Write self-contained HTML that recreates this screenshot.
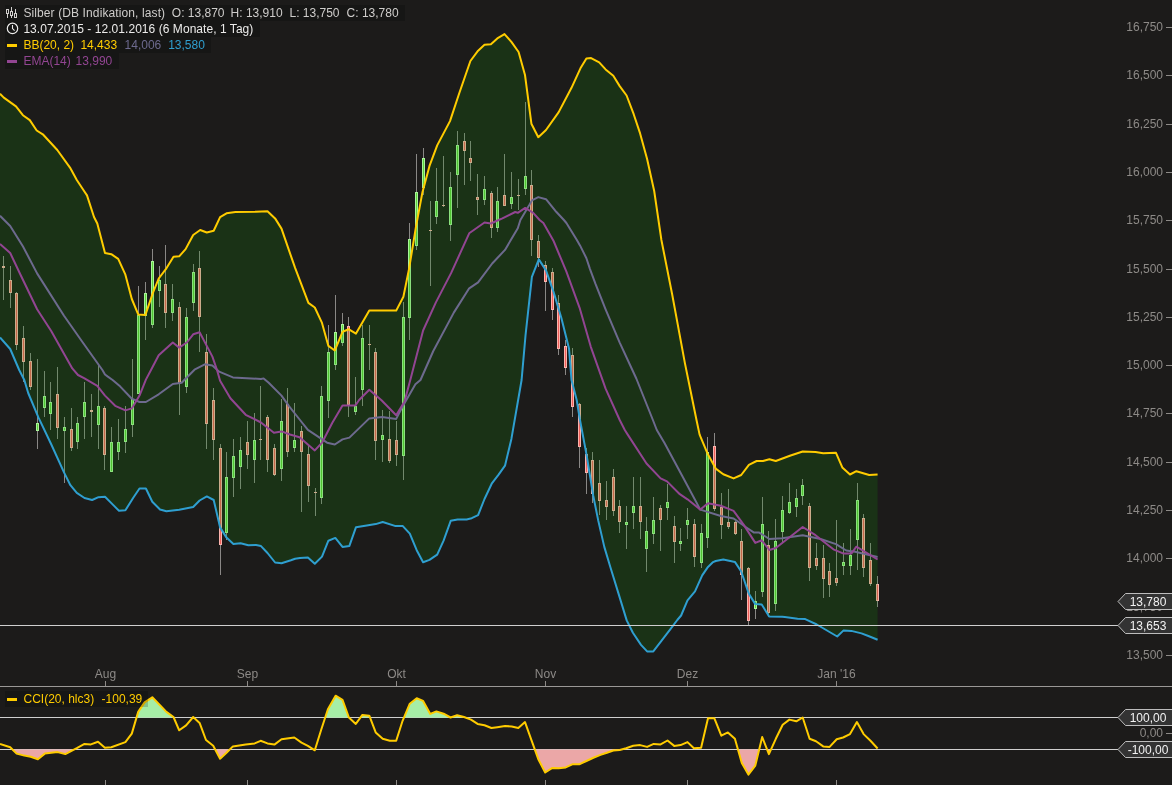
<!DOCTYPE html>
<html><head><meta charset="utf-8"><style>
html,body{margin:0;padding:0;background:#1c1b1a;}
body{width:1172px;height:785px;overflow:hidden;position:relative;font-family:"Liberation Sans",sans-serif;}
svg{position:absolute;left:0;top:0;will-change:transform;}
text{font-family:"Liberation Sans",sans-serif;font-size:12px;}
</style></head><body>
<svg width="1172" height="785" viewBox="0 0 1172 785">
<rect x="0" y="0" width="1172" height="785" fill="#1c1b1a"/>

<g shape-rendering="crispEdges">
<rect x="3" y="255.5" width="1" height="44.5" fill="#8a8886"/>
<rect x="2" y="266.0" width="3" height="1.5" fill="#fbb3ad"/>
<rect x="10" y="265.7" width="1" height="42.3" fill="#8a8886"/>
<rect x="9" y="280.3" width="3" height="12.3" fill="#fbb3ad"/>
<rect x="10" y="281.3" width="1" height="10.3" fill="#f0605a"/>
<rect x="16" y="292.0" width="1" height="58.0" fill="#8a8886"/>
<rect x="15" y="293.3" width="3" height="51.7" fill="#fbb3ad"/>
<rect x="16" y="294.3" width="1" height="49.7" fill="#f0605a"/>
<rect x="23" y="326.0" width="1" height="55.5" fill="#8a8886"/>
<rect x="22" y="338.0" width="3" height="23.5" fill="#fbb3ad"/>
<rect x="23" y="339.0" width="1" height="21.5" fill="#f0605a"/>
<rect x="30" y="352.8" width="1" height="37.2" fill="#8a8886"/>
<rect x="29" y="361.0" width="3" height="25.6" fill="#fbb3ad"/>
<rect x="30" y="362.0" width="1" height="23.6" fill="#f0605a"/>
<rect x="37" y="359.0" width="1" height="90.0" fill="#8a8886"/>
<rect x="36" y="423.0" width="3" height="8.4" fill="#a9f59a"/>
<rect x="37" y="424.0" width="1" height="6.4" fill="#5fd23c"/>
<rect x="44" y="370.7" width="1" height="46.3" fill="#8a8886"/>
<rect x="43" y="395.6" width="3" height="12.8" fill="#a9f59a"/>
<rect x="44" y="396.6" width="1" height="10.8" fill="#5fd23c"/>
<rect x="50" y="381.5" width="1" height="48.5" fill="#8a8886"/>
<rect x="49" y="402.0" width="3" height="11.5" fill="#a9f59a"/>
<rect x="50" y="403.0" width="1" height="9.5" fill="#5fd23c"/>
<rect x="57" y="366.8" width="1" height="72.2" fill="#8a8886"/>
<rect x="56" y="394.3" width="3" height="33.3" fill="#fbb3ad"/>
<rect x="57" y="395.3" width="1" height="31.3" fill="#f0605a"/>
<rect x="64" y="417.4" width="1" height="65.2" fill="#8a8886"/>
<rect x="63" y="426.8" width="3" height="4.6" fill="#a9f59a"/>
<rect x="64" y="427.8" width="1" height="2.6" fill="#5fd23c"/>
<rect x="71" y="408.4" width="1" height="43.0" fill="#8a8886"/>
<rect x="70" y="429.4" width="3" height="18.6" fill="#fbb3ad"/>
<rect x="71" y="430.4" width="1" height="16.6" fill="#f0605a"/>
<rect x="77" y="417.4" width="1" height="31.9" fill="#8a8886"/>
<rect x="76" y="423.2" width="3" height="19.2" fill="#a9f59a"/>
<rect x="77" y="424.2" width="1" height="17.2" fill="#5fd23c"/>
<rect x="84" y="381.5" width="1" height="57.1" fill="#8a8886"/>
<rect x="83" y="402.0" width="3" height="15.4" fill="#a9f59a"/>
<rect x="84" y="403.0" width="1" height="13.4" fill="#5fd23c"/>
<rect x="91" y="394.3" width="1" height="42.2" fill="#8a8886"/>
<rect x="90" y="410.0" width="3" height="1.5" fill="#fbb3ad"/>
<rect x="98" y="364.0" width="1" height="85.3" fill="#8a8886"/>
<rect x="97" y="405.8" width="3" height="19.2" fill="#a9f59a"/>
<rect x="98" y="406.8" width="1" height="17.2" fill="#5fd23c"/>
<rect x="104" y="405.8" width="1" height="64.0" fill="#8a8886"/>
<rect x="103" y="407.9" width="3" height="46.6" fill="#fbb3ad"/>
<rect x="104" y="408.9" width="1" height="44.6" fill="#f0605a"/>
<rect x="111" y="426.8" width="1" height="45.6" fill="#8a8886"/>
<rect x="110" y="442.2" width="3" height="29.4" fill="#a9f59a"/>
<rect x="111" y="443.2" width="1" height="27.4" fill="#5fd23c"/>
<rect x="118" y="418.6" width="1" height="41.0" fill="#8a8886"/>
<rect x="117" y="442.2" width="3" height="10.2" fill="#a9f59a"/>
<rect x="118" y="443.2" width="1" height="8.2" fill="#5fd23c"/>
<rect x="125" y="405.8" width="1" height="47.4" fill="#8a8886"/>
<rect x="124" y="428.9" width="3" height="13.3" fill="#a9f59a"/>
<rect x="125" y="429.9" width="1" height="11.3" fill="#5fd23c"/>
<rect x="132" y="359.0" width="1" height="77.5" fill="#8a8886"/>
<rect x="131" y="399.4" width="3" height="25.6" fill="#a9f59a"/>
<rect x="132" y="400.4" width="1" height="23.6" fill="#5fd23c"/>
<rect x="138" y="286.0" width="1" height="108.3" fill="#8a8886"/>
<rect x="137" y="315.0" width="3" height="79.3" fill="#a9f59a"/>
<rect x="138" y="316.0" width="1" height="77.3" fill="#5fd23c"/>
<rect x="145" y="282.4" width="1" height="57.6" fill="#8a8886"/>
<rect x="144" y="292.6" width="3" height="23.0" fill="#a9f59a"/>
<rect x="145" y="293.6" width="1" height="21.0" fill="#5fd23c"/>
<rect x="152" y="249.0" width="1" height="79.0" fill="#8a8886"/>
<rect x="151" y="261.4" width="3" height="63.2" fill="#a9f59a"/>
<rect x="152" y="262.4" width="1" height="61.2" fill="#5fd23c"/>
<rect x="159" y="265.7" width="1" height="41.0" fill="#8a8886"/>
<rect x="158" y="280.3" width="3" height="10.3" fill="#a9f59a"/>
<rect x="159" y="281.3" width="1" height="8.3" fill="#5fd23c"/>
<rect x="165" y="245.3" width="1" height="82.7" fill="#8a8886"/>
<rect x="164" y="284.2" width="3" height="28.8" fill="#fbb3ad"/>
<rect x="165" y="285.2" width="1" height="26.8" fill="#f0605a"/>
<rect x="172" y="284.4" width="1" height="36.4" fill="#8a8886"/>
<rect x="171" y="299.0" width="3" height="14.0" fill="#a9f59a"/>
<rect x="172" y="300.0" width="1" height="12.0" fill="#5fd23c"/>
<rect x="179" y="301.6" width="1" height="113.2" fill="#8a8886"/>
<rect x="178" y="307.2" width="3" height="76.8" fill="#fbb3ad"/>
<rect x="179" y="308.2" width="1" height="74.8" fill="#f0605a"/>
<rect x="186" y="307.5" width="1" height="85.5" fill="#8a8886"/>
<rect x="185" y="317.4" width="3" height="69.2" fill="#a9f59a"/>
<rect x="186" y="318.4" width="1" height="67.2" fill="#5fd23c"/>
<rect x="193" y="264.0" width="1" height="46.5" fill="#8a8886"/>
<rect x="192" y="272.0" width="3" height="31.4" fill="#a9f59a"/>
<rect x="193" y="273.0" width="1" height="29.4" fill="#5fd23c"/>
<rect x="199" y="251.0" width="1" height="100.5" fill="#8a8886"/>
<rect x="198" y="268.3" width="3" height="49.1" fill="#fbb3ad"/>
<rect x="199" y="269.3" width="1" height="47.1" fill="#f0605a"/>
<rect x="206" y="333.6" width="1" height="115.7" fill="#8a8886"/>
<rect x="205" y="352.0" width="3" height="71.8" fill="#fbb3ad"/>
<rect x="206" y="353.0" width="1" height="69.8" fill="#f0605a"/>
<rect x="213" y="388.0" width="1" height="71.6" fill="#8a8886"/>
<rect x="212" y="400.2" width="3" height="40.2" fill="#fbb3ad"/>
<rect x="213" y="401.2" width="1" height="38.2" fill="#f0605a"/>
<rect x="220" y="444.2" width="1" height="130.8" fill="#8a8886"/>
<rect x="219" y="448.0" width="3" height="97.3" fill="#fbb3ad"/>
<rect x="220" y="449.0" width="1" height="95.3" fill="#f0605a"/>
<rect x="226" y="451.9" width="1" height="88.3" fill="#8a8886"/>
<rect x="225" y="477.0" width="3" height="56.3" fill="#a9f59a"/>
<rect x="226" y="478.0" width="1" height="54.3" fill="#5fd23c"/>
<rect x="233" y="439.0" width="1" height="57.7" fill="#8a8886"/>
<rect x="232" y="456.3" width="3" height="21.2" fill="#a9f59a"/>
<rect x="233" y="457.3" width="1" height="19.2" fill="#5fd23c"/>
<rect x="240" y="437.0" width="1" height="52.0" fill="#8a8886"/>
<rect x="239" y="450.0" width="3" height="16.5" fill="#a9f59a"/>
<rect x="240" y="451.0" width="1" height="14.5" fill="#5fd23c"/>
<rect x="247" y="421.2" width="1" height="47.3" fill="#8a8886"/>
<rect x="246" y="442.2" width="3" height="12.3" fill="#fbb3ad"/>
<rect x="247" y="443.2" width="1" height="10.3" fill="#f0605a"/>
<rect x="254" y="413.0" width="1" height="69.6" fill="#8a8886"/>
<rect x="253" y="439.9" width="3" height="20.5" fill="#a9f59a"/>
<rect x="254" y="440.9" width="1" height="18.5" fill="#5fd23c"/>
<rect x="260" y="385.9" width="1" height="73.7" fill="#8a8886"/>
<rect x="259" y="438.5" width="3" height="1.5" fill="#fbb3ad"/>
<rect x="267" y="414.8" width="1" height="57.6" fill="#8a8886"/>
<rect x="266" y="417.4" width="3" height="43.0" fill="#fbb3ad"/>
<rect x="267" y="418.4" width="1" height="41.0" fill="#f0605a"/>
<rect x="274" y="444.2" width="1" height="32.0" fill="#8a8886"/>
<rect x="273" y="448.0" width="3" height="27.4" fill="#fbb3ad"/>
<rect x="274" y="449.0" width="1" height="25.4" fill="#f0605a"/>
<rect x="281" y="399.4" width="1" height="81.2" fill="#8a8886"/>
<rect x="280" y="421.2" width="3" height="48.1" fill="#a9f59a"/>
<rect x="281" y="422.2" width="1" height="46.1" fill="#5fd23c"/>
<rect x="287" y="388.0" width="1" height="69.0" fill="#8a8886"/>
<rect x="286" y="404.0" width="3" height="48.4" fill="#fbb3ad"/>
<rect x="287" y="405.0" width="1" height="46.4" fill="#f0605a"/>
<rect x="294" y="403.3" width="1" height="48.6" fill="#8a8886"/>
<rect x="293" y="439.9" width="3" height="8.1" fill="#a9f59a"/>
<rect x="294" y="440.9" width="1" height="6.1" fill="#5fd23c"/>
<rect x="301" y="425.6" width="1" height="86.2" fill="#8a8886"/>
<rect x="300" y="431.2" width="3" height="21.2" fill="#fbb3ad"/>
<rect x="301" y="432.2" width="1" height="19.2" fill="#f0605a"/>
<rect x="308" y="445.0" width="1" height="56.6" fill="#8a8886"/>
<rect x="307" y="454.2" width="3" height="31.3" fill="#fbb3ad"/>
<rect x="308" y="455.2" width="1" height="29.3" fill="#f0605a"/>
<rect x="315" y="487.5" width="1" height="28.2" fill="#8a8886"/>
<rect x="314" y="491.6" width="3" height="1.5" fill="#fbb3ad"/>
<rect x="321" y="386.4" width="1" height="117.2" fill="#8a8886"/>
<rect x="320" y="396.1" width="3" height="101.6" fill="#a9f59a"/>
<rect x="321" y="397.1" width="1" height="99.6" fill="#5fd23c"/>
<rect x="328" y="325.4" width="1" height="93.0" fill="#8a8886"/>
<rect x="327" y="351.8" width="3" height="48.7" fill="#a9f59a"/>
<rect x="328" y="352.8" width="1" height="46.7" fill="#5fd23c"/>
<rect x="335" y="295.2" width="1" height="75.0" fill="#8a8886"/>
<rect x="334" y="332.3" width="3" height="32.7" fill="#a9f59a"/>
<rect x="335" y="333.3" width="1" height="30.7" fill="#5fd23c"/>
<rect x="342" y="312.6" width="1" height="33.3" fill="#8a8886"/>
<rect x="341" y="324.1" width="3" height="18.5" fill="#a9f59a"/>
<rect x="342" y="325.1" width="1" height="16.5" fill="#5fd23c"/>
<rect x="348" y="317.2" width="1" height="99.9" fill="#8a8886"/>
<rect x="347" y="325.9" width="3" height="79.2" fill="#fbb3ad"/>
<rect x="348" y="326.9" width="1" height="77.2" fill="#f0605a"/>
<rect x="355" y="376.6" width="1" height="37.9" fill="#8a8886"/>
<rect x="354" y="405.6" width="3" height="6.4" fill="#a9f59a"/>
<rect x="355" y="406.6" width="1" height="4.4" fill="#5fd23c"/>
<rect x="362" y="325.4" width="1" height="80.2" fill="#8a8886"/>
<rect x="361" y="338.2" width="3" height="52.0" fill="#a9f59a"/>
<rect x="362" y="339.2" width="1" height="50.0" fill="#5fd23c"/>
<rect x="369" y="325.4" width="1" height="44.8" fill="#8a8886"/>
<rect x="368" y="343.6" width="3" height="1.5" fill="#fbb3ad"/>
<rect x="375" y="348.0" width="1" height="111.9" fill="#8a8886"/>
<rect x="374" y="352.3" width="3" height="88.4" fill="#fbb3ad"/>
<rect x="375" y="353.3" width="1" height="86.4" fill="#f0605a"/>
<rect x="382" y="410.0" width="1" height="51.9" fill="#8a8886"/>
<rect x="381" y="435.0" width="3" height="4.6" fill="#a9f59a"/>
<rect x="382" y="436.0" width="1" height="2.6" fill="#5fd23c"/>
<rect x="389" y="410.7" width="1" height="52.5" fill="#8a8886"/>
<rect x="388" y="438.9" width="3" height="21.7" fill="#fbb3ad"/>
<rect x="389" y="439.9" width="1" height="19.7" fill="#f0605a"/>
<rect x="396" y="421.0" width="1" height="44.7" fill="#8a8886"/>
<rect x="395" y="440.1" width="3" height="14.6" fill="#fbb3ad"/>
<rect x="396" y="441.1" width="1" height="12.6" fill="#f0605a"/>
<rect x="403" y="302.4" width="1" height="177.9" fill="#8a8886"/>
<rect x="402" y="317.0" width="3" height="139.3" fill="#a9f59a"/>
<rect x="403" y="318.0" width="1" height="137.3" fill="#5fd23c"/>
<rect x="409" y="222.5" width="1" height="117.0" fill="#8a8886"/>
<rect x="408" y="239.2" width="3" height="78.5" fill="#a9f59a"/>
<rect x="409" y="240.2" width="1" height="76.5" fill="#5fd23c"/>
<rect x="416" y="154.4" width="1" height="95.6" fill="#8a8886"/>
<rect x="415" y="191.5" width="3" height="54.1" fill="#a9f59a"/>
<rect x="416" y="192.5" width="1" height="52.1" fill="#5fd23c"/>
<rect x="423" y="148.0" width="1" height="47.3" fill="#8a8886"/>
<rect x="422" y="158.2" width="3" height="29.4" fill="#a9f59a"/>
<rect x="423" y="159.2" width="1" height="27.4" fill="#5fd23c"/>
<rect x="430" y="201.0" width="1" height="84.7" fill="#8a8886"/>
<rect x="429" y="229.7" width="3" height="1.5" fill="#fbb3ad"/>
<rect x="436" y="168.0" width="1" height="55.5" fill="#8a8886"/>
<rect x="435" y="201.0" width="3" height="15.6" fill="#a9f59a"/>
<rect x="436" y="202.0" width="1" height="13.6" fill="#5fd23c"/>
<rect x="443" y="155.7" width="1" height="51.3" fill="#8a8886"/>
<rect x="442" y="204.5" width="3" height="1.5" fill="#fbb3ad"/>
<rect x="450" y="172.3" width="1" height="68.7" fill="#8a8886"/>
<rect x="449" y="187.0" width="3" height="37.8" fill="#a9f59a"/>
<rect x="450" y="188.0" width="1" height="35.8" fill="#5fd23c"/>
<rect x="457" y="131.3" width="1" height="76.7" fill="#8a8886"/>
<rect x="456" y="145.4" width="3" height="29.4" fill="#a9f59a"/>
<rect x="457" y="146.4" width="1" height="27.4" fill="#5fd23c"/>
<rect x="464" y="132.6" width="1" height="52.4" fill="#8a8886"/>
<rect x="463" y="141.0" width="3" height="9.5" fill="#fbb3ad"/>
<rect x="464" y="142.0" width="1" height="7.5" fill="#f0605a"/>
<rect x="470" y="141.0" width="1" height="39.7" fill="#8a8886"/>
<rect x="469" y="158.2" width="3" height="4.6" fill="#fbb3ad"/>
<rect x="470" y="159.2" width="1" height="2.6" fill="#f0605a"/>
<rect x="477" y="174.3" width="1" height="41.1" fill="#8a8886"/>
<rect x="476" y="196.6" width="3" height="3.1" fill="#fbb3ad"/>
<rect x="477" y="197.6" width="1" height="1.1" fill="#f0605a"/>
<rect x="484" y="176.0" width="1" height="29.0" fill="#8a8886"/>
<rect x="483" y="189.0" width="3" height="10.7" fill="#a9f59a"/>
<rect x="484" y="190.0" width="1" height="8.7" fill="#5fd23c"/>
<rect x="491" y="191.0" width="1" height="47.4" fill="#8a8886"/>
<rect x="490" y="192.8" width="3" height="35.4" fill="#fbb3ad"/>
<rect x="491" y="193.8" width="1" height="33.4" fill="#f0605a"/>
<rect x="497" y="186.9" width="1" height="45.1" fill="#8a8886"/>
<rect x="496" y="201.0" width="3" height="27.2" fill="#a9f59a"/>
<rect x="497" y="202.0" width="1" height="25.2" fill="#5fd23c"/>
<rect x="504" y="154.4" width="1" height="50.6" fill="#8a8886"/>
<rect x="503" y="195.3" width="3" height="10.3" fill="#fbb3ad"/>
<rect x="504" y="196.3" width="1" height="8.3" fill="#f0605a"/>
<rect x="511" y="172.3" width="1" height="37.1" fill="#8a8886"/>
<rect x="510" y="196.6" width="3" height="7.2" fill="#a9f59a"/>
<rect x="511" y="197.6" width="1" height="5.2" fill="#5fd23c"/>
<rect x="518" y="179.2" width="1" height="30.8" fill="#8a8886"/>
<rect x="517" y="194.8" width="3" height="1.5" fill="#fbb3ad"/>
<rect x="525" y="101.9" width="1" height="93.1" fill="#8a8886"/>
<rect x="524" y="175.6" width="3" height="13.8" fill="#a9f59a"/>
<rect x="525" y="176.6" width="1" height="11.8" fill="#5fd23c"/>
<rect x="531" y="170.2" width="1" height="86.1" fill="#8a8886"/>
<rect x="530" y="185.0" width="3" height="54.7" fill="#fbb3ad"/>
<rect x="531" y="186.0" width="1" height="52.7" fill="#f0605a"/>
<rect x="538" y="234.6" width="1" height="32.4" fill="#8a8886"/>
<rect x="537" y="241.0" width="3" height="17.4" fill="#fbb3ad"/>
<rect x="538" y="242.0" width="1" height="15.4" fill="#f0605a"/>
<rect x="545" y="261.4" width="1" height="49.2" fill="#8a8886"/>
<rect x="544" y="264.5" width="3" height="17.9" fill="#fbb3ad"/>
<rect x="545" y="265.5" width="1" height="15.9" fill="#f0605a"/>
<rect x="552" y="268.0" width="1" height="52.3" fill="#8a8886"/>
<rect x="551" y="272.2" width="3" height="37.3" fill="#fbb3ad"/>
<rect x="552" y="273.2" width="1" height="35.3" fill="#f0605a"/>
<rect x="558" y="294.7" width="1" height="60.3" fill="#8a8886"/>
<rect x="557" y="303.1" width="3" height="45.4" fill="#fbb3ad"/>
<rect x="558" y="304.1" width="1" height="43.4" fill="#f0605a"/>
<rect x="565" y="340.0" width="1" height="35.3" fill="#8a8886"/>
<rect x="564" y="346.4" width="3" height="21.2" fill="#fbb3ad"/>
<rect x="565" y="347.4" width="1" height="19.2" fill="#f0605a"/>
<rect x="572" y="348.0" width="1" height="69.1" fill="#8a8886"/>
<rect x="571" y="354.8" width="3" height="52.1" fill="#fbb3ad"/>
<rect x="572" y="355.8" width="1" height="50.1" fill="#f0605a"/>
<rect x="579" y="402.5" width="1" height="65.8" fill="#8a8886"/>
<rect x="578" y="404.3" width="3" height="42.2" fill="#fbb3ad"/>
<rect x="579" y="405.3" width="1" height="40.2" fill="#f0605a"/>
<rect x="586" y="447.8" width="1" height="46.1" fill="#8a8886"/>
<rect x="585" y="454.2" width="3" height="19.2" fill="#fbb3ad"/>
<rect x="586" y="455.2" width="1" height="17.2" fill="#f0605a"/>
<rect x="592" y="452.0" width="1" height="51.2" fill="#8a8886"/>
<rect x="591" y="459.7" width="3" height="34.5" fill="#fbb3ad"/>
<rect x="592" y="460.7" width="1" height="32.5" fill="#f0605a"/>
<rect x="599" y="459.7" width="1" height="55.5" fill="#8a8886"/>
<rect x="598" y="482.7" width="3" height="17.9" fill="#fbb3ad"/>
<rect x="599" y="483.7" width="1" height="15.9" fill="#f0605a"/>
<rect x="606" y="481.0" width="1" height="38.8" fill="#8a8886"/>
<rect x="605" y="499.9" width="3" height="6.6" fill="#fbb3ad"/>
<rect x="606" y="500.9" width="1" height="4.6" fill="#f0605a"/>
<rect x="613" y="468.6" width="1" height="47.4" fill="#8a8886"/>
<rect x="612" y="476.8" width="3" height="34.1" fill="#fbb3ad"/>
<rect x="613" y="477.8" width="1" height="32.1" fill="#f0605a"/>
<rect x="619" y="499.9" width="1" height="32.7" fill="#8a8886"/>
<rect x="618" y="506.3" width="3" height="16.1" fill="#fbb3ad"/>
<rect x="619" y="507.3" width="1" height="14.1" fill="#f0605a"/>
<rect x="626" y="505.7" width="1" height="43.6" fill="#8a8886"/>
<rect x="625" y="521.6" width="3" height="3.4" fill="#a9f59a"/>
<rect x="626" y="522.6" width="1" height="1.4" fill="#5fd23c"/>
<rect x="633" y="476.8" width="1" height="52.0" fill="#8a8886"/>
<rect x="632" y="505.7" width="3" height="7.0" fill="#a9f59a"/>
<rect x="633" y="506.7" width="1" height="5.0" fill="#5fd23c"/>
<rect x="640" y="476.8" width="1" height="62.2" fill="#8a8886"/>
<rect x="639" y="505.7" width="3" height="16.7" fill="#fbb3ad"/>
<rect x="640" y="506.7" width="1" height="14.7" fill="#f0605a"/>
<rect x="646" y="517.3" width="1" height="55.0" fill="#8a8886"/>
<rect x="645" y="530.6" width="3" height="18.7" fill="#a9f59a"/>
<rect x="646" y="531.6" width="1" height="16.7" fill="#5fd23c"/>
<rect x="653" y="496.8" width="1" height="47.3" fill="#8a8886"/>
<rect x="652" y="519.8" width="3" height="14.1" fill="#a9f59a"/>
<rect x="653" y="520.8" width="1" height="12.1" fill="#5fd23c"/>
<rect x="660" y="504.5" width="1" height="46.0" fill="#8a8886"/>
<rect x="659" y="507.8" width="3" height="12.5" fill="#fbb3ad"/>
<rect x="660" y="508.8" width="1" height="10.5" fill="#f0605a"/>
<rect x="667" y="483.5" width="1" height="36.3" fill="#8a8886"/>
<rect x="666" y="501.9" width="3" height="6.4" fill="#a9f59a"/>
<rect x="667" y="502.9" width="1" height="4.4" fill="#5fd23c"/>
<rect x="674" y="516.0" width="1" height="47.3" fill="#8a8886"/>
<rect x="673" y="525.7" width="3" height="15.9" fill="#fbb3ad"/>
<rect x="674" y="526.7" width="1" height="13.9" fill="#f0605a"/>
<rect x="680" y="527.5" width="1" height="23.0" fill="#8a8886"/>
<rect x="679" y="541.1" width="3" height="2.5" fill="#a9f59a"/>
<rect x="680" y="542.1" width="1" height="0.5" fill="#5fd23c"/>
<rect x="687" y="508.3" width="1" height="30.7" fill="#8a8886"/>
<rect x="686" y="519.8" width="3" height="5.2" fill="#a9f59a"/>
<rect x="687" y="520.8" width="1" height="3.2" fill="#5fd23c"/>
<rect x="694" y="518.5" width="1" height="48.7" fill="#8a8886"/>
<rect x="693" y="523.7" width="3" height="33.2" fill="#fbb3ad"/>
<rect x="694" y="524.7" width="1" height="31.2" fill="#f0605a"/>
<rect x="701" y="523.7" width="1" height="44.7" fill="#8a8886"/>
<rect x="700" y="532.6" width="3" height="30.0" fill="#a9f59a"/>
<rect x="701" y="533.6" width="1" height="28.0" fill="#5fd23c"/>
<rect x="707" y="437.0" width="1" height="111.0" fill="#8a8886"/>
<rect x="706" y="452.0" width="3" height="85.7" fill="#a9f59a"/>
<rect x="707" y="453.0" width="1" height="83.7" fill="#5fd23c"/>
<rect x="714" y="432.8" width="1" height="78.1" fill="#8a8886"/>
<rect x="713" y="445.6" width="3" height="63.4" fill="#fbb3ad"/>
<rect x="714" y="446.6" width="1" height="61.4" fill="#f0605a"/>
<rect x="721" y="493.0" width="1" height="46.0" fill="#8a8886"/>
<rect x="720" y="507.0" width="3" height="18.0" fill="#fbb3ad"/>
<rect x="721" y="508.0" width="1" height="16.0" fill="#f0605a"/>
<rect x="728" y="488.6" width="1" height="40.2" fill="#8a8886"/>
<rect x="727" y="521.9" width="3" height="5.1" fill="#fbb3ad"/>
<rect x="728" y="522.9" width="1" height="3.1" fill="#f0605a"/>
<rect x="735" y="521.1" width="1" height="13.6" fill="#8a8886"/>
<rect x="734" y="521.9" width="3" height="12.0" fill="#fbb3ad"/>
<rect x="735" y="522.9" width="1" height="10.0" fill="#f0605a"/>
<rect x="741" y="528.8" width="1" height="71.6" fill="#8a8886"/>
<rect x="740" y="541.1" width="3" height="33.8" fill="#fbb3ad"/>
<rect x="741" y="542.1" width="1" height="31.8" fill="#f0605a"/>
<rect x="748" y="567.2" width="1" height="57.3" fill="#8a8886"/>
<rect x="747" y="567.9" width="3" height="52.7" fill="#fbb3ad"/>
<rect x="748" y="568.9" width="1" height="50.7" fill="#f0605a"/>
<rect x="755" y="591.0" width="1" height="28.3" fill="#8a8886"/>
<rect x="754" y="601.2" width="3" height="7.9" fill="#a9f59a"/>
<rect x="755" y="602.2" width="1" height="5.9" fill="#5fd23c"/>
<rect x="762" y="496.8" width="1" height="99.8" fill="#8a8886"/>
<rect x="761" y="524.4" width="3" height="67.1" fill="#a9f59a"/>
<rect x="762" y="525.4" width="1" height="65.1" fill="#5fd23c"/>
<rect x="768" y="531.3" width="1" height="82.7" fill="#8a8886"/>
<rect x="767" y="545.4" width="3" height="67.6" fill="#fbb3ad"/>
<rect x="768" y="546.4" width="1" height="65.6" fill="#f0605a"/>
<rect x="775" y="518.5" width="1" height="92.2" fill="#8a8886"/>
<rect x="774" y="540.8" width="3" height="63.0" fill="#a9f59a"/>
<rect x="775" y="541.8" width="1" height="61.0" fill="#5fd23c"/>
<rect x="782" y="495.5" width="1" height="46.1" fill="#8a8886"/>
<rect x="781" y="510.1" width="3" height="21.7" fill="#a9f59a"/>
<rect x="782" y="511.1" width="1" height="19.7" fill="#5fd23c"/>
<rect x="789" y="482.7" width="1" height="31.5" fill="#8a8886"/>
<rect x="788" y="502.4" width="3" height="10.3" fill="#a9f59a"/>
<rect x="789" y="503.4" width="1" height="8.3" fill="#5fd23c"/>
<rect x="796" y="489.1" width="1" height="28.2" fill="#8a8886"/>
<rect x="795" y="498.0" width="3" height="9.0" fill="#a9f59a"/>
<rect x="796" y="499.0" width="1" height="7.0" fill="#5fd23c"/>
<rect x="802" y="478.9" width="1" height="25.6" fill="#8a8886"/>
<rect x="801" y="485.3" width="3" height="10.2" fill="#a9f59a"/>
<rect x="802" y="486.3" width="1" height="8.2" fill="#5fd23c"/>
<rect x="809" y="503.2" width="1" height="78.0" fill="#8a8886"/>
<rect x="808" y="506.3" width="3" height="61.6" fill="#fbb3ad"/>
<rect x="809" y="507.3" width="1" height="59.6" fill="#f0605a"/>
<rect x="816" y="542.9" width="1" height="26.8" fill="#8a8886"/>
<rect x="815" y="558.2" width="3" height="8.2" fill="#fbb3ad"/>
<rect x="816" y="559.2" width="1" height="6.2" fill="#f0605a"/>
<rect x="823" y="545.4" width="1" height="52.5" fill="#8a8886"/>
<rect x="822" y="558.2" width="3" height="20.5" fill="#fbb3ad"/>
<rect x="823" y="559.2" width="1" height="18.5" fill="#f0605a"/>
<rect x="829" y="563.3" width="1" height="33.3" fill="#8a8886"/>
<rect x="828" y="570.5" width="3" height="14.6" fill="#fbb3ad"/>
<rect x="829" y="571.5" width="1" height="12.6" fill="#f0605a"/>
<rect x="836" y="519.8" width="1" height="66.6" fill="#8a8886"/>
<rect x="835" y="578.2" width="3" height="4.3" fill="#fbb3ad"/>
<rect x="836" y="579.2" width="1" height="2.3" fill="#f0605a"/>
<rect x="843" y="542.9" width="1" height="32.0" fill="#8a8886"/>
<rect x="842" y="562.1" width="3" height="4.3" fill="#a9f59a"/>
<rect x="843" y="563.1" width="1" height="2.3" fill="#5fd23c"/>
<rect x="850" y="528.8" width="1" height="46.1" fill="#8a8886"/>
<rect x="849" y="555.1" width="3" height="11.3" fill="#a9f59a"/>
<rect x="850" y="556.1" width="1" height="9.3" fill="#5fd23c"/>
<rect x="857" y="482.7" width="1" height="87.0" fill="#8a8886"/>
<rect x="856" y="499.9" width="3" height="39.9" fill="#a9f59a"/>
<rect x="857" y="500.9" width="1" height="37.9" fill="#5fd23c"/>
<rect x="863" y="514.2" width="1" height="62.4" fill="#8a8886"/>
<rect x="862" y="517.8" width="3" height="50.6" fill="#fbb3ad"/>
<rect x="863" y="518.8" width="1" height="48.6" fill="#f0605a"/>
<rect x="870" y="542.9" width="1" height="43.5" fill="#8a8886"/>
<rect x="869" y="559.5" width="3" height="24.3" fill="#fbb3ad"/>
<rect x="870" y="560.5" width="1" height="22.3" fill="#f0605a"/>
<rect x="877" y="576.0" width="1" height="31.0" fill="#8a8886"/>
<rect x="876" y="584.0" width="3" height="17.4" fill="#fbb3ad"/>
<rect x="877" y="585.0" width="1" height="15.4" fill="#f0605a"/>
</g>
<path d="M0.0,93.8 L3.8,97.6 L16.0,106.4 L22.9,115.2 L29.8,120.1 L36.7,130.5 L42.8,134.3 L47.4,139.3 L57.3,150.0 L70.0,167.6 L76.8,180.0 L84.4,191.5 L87.0,195.4 L94.0,217.0 L97.3,223.5 L105.0,253.0 L111.3,254.2 L118.2,258.8 L125.4,274.7 L131.8,299.0 L138.2,314.4 L145.4,314.9 L153.0,292.6 L158.7,278.5 L166.4,268.3 L173.5,256.8 L179.2,256.3 L185.6,249.1 L193.2,235.0 L200.2,230.0 L206.8,232.5 L213.7,230.7 L220.1,217.1 L226.5,213.3 L235.5,212.0 L256.0,211.7 L267.5,211.2 L275.1,218.4 L281.5,228.6 L290.9,255.9 L295.1,267.8 L300.8,282.8 L308.4,302.9 L314.8,307.5 L322.0,322.9 L328.4,345.9 L334.8,350.5 L342.5,331.8 L348.9,329.3 L356.0,333.6 L369.3,310.6 L396.2,310.6 L403.4,296.7 L409.0,269.1 L416.0,226.7 L422.5,191.9 L429.5,165.9 L437.2,145.4 L450.0,121.1 L458.9,94.2 L470.4,61.0 L478.1,50.7 L484.5,44.8 L490.9,44.3 L497.3,38.4 L504.5,34.1 L511.4,41.8 L518.6,52.0 L525.0,75.0 L531.4,123.7 L538.3,137.2 L546.0,130.0 L558.7,112.1 L571.5,87.8 L580.9,67.4 L586.4,58.4 L591.1,58.1 L599.2,62.3 L605.6,69.4 L613.3,75.8 L619.7,86.1 L626.6,95.5 L633.7,114.2 L640.1,133.4 L647.1,159.0 L654.2,191.0 L661.4,240.0 L672.1,294.0 L684.9,363.1 L696.5,420.0 L699.6,434.6 L708.0,454.6 L715.7,468.6 L723.3,474.3 L733.6,478.4 L741.2,475.0 L748.9,464.8 L756.6,461.0 L763.0,461.0 L769.4,459.2 L775.8,461.0 L789.9,455.8 L802.7,451.5 L815.5,452.0 L823.2,453.3 L836.0,452.8 L842.3,467.4 L850.0,474.5 L856.4,471.2 L869.2,475.0 L877.6,474.5 L877.6,639.8 L869.0,636.3 L861.5,633.4 L851.3,630.9 L843.6,630.4 L837.2,636.5 L816.8,624.5 L805.2,619.1 L797.6,618.8 L784.8,617.1 L782.2,616.8 L769.1,616.5 L761.7,604.4 L755.3,604.1 L748.9,593.9 L741.2,571.5 L734.9,561.9 L723.3,559.6 L715.7,561.0 L713.1,562.1 L708.0,566.9 L702.2,575.4 L695.0,591.4 L687.5,600.3 L681.1,615.5 L677.3,620.0 L671.0,628.3 L661.4,640.8 L653.3,651.4 L647.1,651.4 L641.0,644.9 L632.9,632.7 L626.7,620.4 L618.6,593.9 L610.4,567.3 L604.3,546.9 L598.2,520.4 L593.3,496.0 L586.7,455.6 L579.8,419.0 L576.7,400.0 L571.5,380.0 L569.0,348.5 L561.3,317.7 L553.6,292.1 L546.0,270.4 L538.8,259.4 L531.9,276.8 L525.5,335.7 L521.6,380.0 L517.1,406.0 L511.4,438.9 L505.0,465.7 L498.6,474.7 L491.7,483.7 L484.5,499.0 L478.1,515.1 L471.7,518.2 L466.6,519.5 L457.6,519.5 L450.7,520.8 L443.6,540.7 L437.2,554.6 L429.5,559.9 L423.1,562.2 L416.7,550.2 L409.8,533.6 L402.6,525.9 L394.9,525.9 L382.7,522.0 L375.7,524.1 L366.8,525.4 L356.0,527.2 L349.4,545.9 L342.5,546.9 L335.3,537.9 L328.4,540.7 L322.0,556.6 L314.8,563.8 L307.9,557.6 L300.0,558.0 L295.1,558.7 L290.9,560.3 L281.5,563.2 L275.1,562.5 L267.5,553.0 L261.0,546.1 L256.0,545.0 L248.3,545.3 L240.6,543.3 L233.4,544.0 L226.5,537.6 L220.1,527.4 L213.7,500.0 L206.8,496.4 L199.6,500.5 L193.2,507.0 L179.2,509.7 L166.4,511.3 L160.0,509.5 L152.3,501.8 L145.9,488.5 L139.5,488.5 L133.1,498.0 L125.4,510.3 L119.0,510.8 L112.6,504.4 L105.0,496.7 L98.5,497.2 L92.1,500.0 L84.5,498.0 L76.8,492.9 L70.4,485.2 L64.0,472.4 L51.2,444.2 L38.4,417.4 L28.2,393.0 L24.3,380.0 L19.2,370.0 L10.2,349.0 L0.0,337.4 Z" fill="rgba(22,145,12,0.2)"/>
<path d="M0.0,215.8 L10.2,226.0 L23.0,246.5 L37.1,273.4 L64.0,315.7 L81.9,341.2 L102.4,370.0 L105.0,374.5 L107.5,376.4 L112.6,380.0 L120.3,386.6 L131.8,398.7 L139.5,402.0 L145.9,402.0 L158.7,394.3 L172.8,384.0 L181.7,382.8 L184.3,380.0 L194.5,369.7 L204.8,364.3 L212.4,365.6 L219.2,371.7 L232.9,377.4 L261.0,379.0 L263.6,378.4 L268.7,382.8 L281.5,395.6 L289.0,406.1 L300.0,420.0 L307.9,429.9 L327.1,442.7 L334.8,444.5 L342.5,439.4 L349.4,437.6 L369.3,418.4 L382.1,417.1 L396.2,418.9 L403.2,405.4 L415.4,384.3 L420.5,380.0 L433.3,351.0 L453.8,312.6 L469.2,288.3 L478.1,282.4 L492.2,263.5 L505.0,249.9 L517.8,228.2 L520.4,220.0 L529.3,205.1 L531.9,200.4 L538.3,197.1 L546.0,199.2 L556.2,211.8 L563.9,220.0 L566.4,223.0 L576.7,239.7 L580.0,245.4 L586.4,258.2 L590.0,269.1 L595.4,283.7 L605.6,309.3 L619.7,342.6 L636.3,378.5 L652.9,420.0 L656.8,430.0 L664.5,443.0 L682.4,476.3 L700.3,509.6 L720.8,516.0 L733.6,518.5 L746.4,527.5 L754.0,532.6 L759.2,532.6 L769.4,539.0 L782.2,538.2 L802.7,535.2 L820.6,539.0 L836.0,544.1 L846.2,550.5 L855.1,551.8 L877.6,556.9" fill="none" stroke="#6d6a8e" stroke-width="2" stroke-linejoin="round"/>
<path d="M0.0,244.0 L10.2,253.0 L20.5,274.7 L37.1,309.3 L51.2,331.0 L72.3,368.4 L78.0,375.0 L84.5,378.4 L97.3,385.9 L105.0,395.6 L115.2,405.8 L125.4,410.4 L131.8,408.4 L139.5,395.6 L145.9,379.6 L151.0,370.0 L158.7,355.3 L172.8,342.5 L179.2,347.6 L186.8,342.5 L193.2,334.3 L199.6,332.3 L212.4,356.6 L217.0,370.0 L220.1,380.8 L230.4,398.2 L245.7,414.8 L261.0,422.5 L273.9,432.7 L281.5,431.4 L290.0,434.5 L299.5,437.3 L314.8,450.4 L322.0,442.7 L332.2,423.0 L342.5,405.6 L355.3,405.6 L359.1,400.0 L369.3,389.8 L381.5,400.2 L396.2,415.3 L404.5,401.5 L410.3,380.0 L423.1,330.5 L435.9,302.4 L451.2,272.9 L469.2,233.3 L484.5,222.5 L490.9,223.5 L498.6,220.0 L502.4,218.4 L515.2,212.0 L517.8,212.8 L525.2,207.9 L533.2,212.8 L539.6,220.0 L543.4,223.0 L553.6,241.0 L566.4,271.7 L579.6,307.8 L590.8,346.8 L605.6,388.7 L619.7,420.0 L624.8,430.0 L627.4,434.1 L646.5,463.5 L660.6,478.4 L667.0,481.4 L679.8,494.2 L687.5,499.3 L700.3,509.6 L708.0,503.2 L720.8,505.7 L733.6,510.9 L743.8,524.9 L755.3,542.9 L761.7,540.3 L769.4,550.0 L775.8,548.0 L802.7,527.0 L815.5,535.2 L833.4,549.3 L843.6,553.6 L851.3,553.6 L856.4,546.7 L877.6,559.5" fill="none" stroke="#924592" stroke-width="2" stroke-linejoin="round"/>
<path d="M0.0,93.8 L3.8,97.6 L16.0,106.4 L22.9,115.2 L29.8,120.1 L36.7,130.5 L42.8,134.3 L47.4,139.3 L57.3,150.0 L70.0,167.6 L76.8,180.0 L84.4,191.5 L87.0,195.4 L94.0,217.0 L97.3,223.5 L105.0,253.0 L111.3,254.2 L118.2,258.8 L125.4,274.7 L131.8,299.0 L138.2,314.4 L145.4,314.9 L153.0,292.6 L158.7,278.5 L166.4,268.3 L173.5,256.8 L179.2,256.3 L185.6,249.1 L193.2,235.0 L200.2,230.0 L206.8,232.5 L213.7,230.7 L220.1,217.1 L226.5,213.3 L235.5,212.0 L256.0,211.7 L267.5,211.2 L275.1,218.4 L281.5,228.6 L290.9,255.9 L295.1,267.8 L300.8,282.8 L308.4,302.9 L314.8,307.5 L322.0,322.9 L328.4,345.9 L334.8,350.5 L342.5,331.8 L348.9,329.3 L356.0,333.6 L369.3,310.6 L396.2,310.6 L403.4,296.7 L409.0,269.1 L416.0,226.7 L422.5,191.9 L429.5,165.9 L437.2,145.4 L450.0,121.1 L458.9,94.2 L470.4,61.0 L478.1,50.7 L484.5,44.8 L490.9,44.3 L497.3,38.4 L504.5,34.1 L511.4,41.8 L518.6,52.0 L525.0,75.0 L531.4,123.7 L538.3,137.2 L546.0,130.0 L558.7,112.1 L571.5,87.8 L580.9,67.4 L586.4,58.4 L591.1,58.1 L599.2,62.3 L605.6,69.4 L613.3,75.8 L619.7,86.1 L626.6,95.5 L633.7,114.2 L640.1,133.4 L647.1,159.0 L654.2,191.0 L661.4,240.0 L672.1,294.0 L684.9,363.1 L696.5,420.0 L699.6,434.6 L708.0,454.6 L715.7,468.6 L723.3,474.3 L733.6,478.4 L741.2,475.0 L748.9,464.8 L756.6,461.0 L763.0,461.0 L769.4,459.2 L775.8,461.0 L789.9,455.8 L802.7,451.5 L815.5,452.0 L823.2,453.3 L836.0,452.8 L842.3,467.4 L850.0,474.5 L856.4,471.2 L869.2,475.0 L877.6,474.5" fill="none" stroke="#ffcc00" stroke-width="2" stroke-linejoin="round"/>
<path d="M0.0,337.4 L10.2,349.0 L19.2,370.0 L24.3,380.0 L28.2,393.0 L38.4,417.4 L51.2,444.2 L64.0,472.4 L70.4,485.2 L76.8,492.9 L84.5,498.0 L92.1,500.0 L98.5,497.2 L105.0,496.7 L112.6,504.4 L119.0,510.8 L125.4,510.3 L133.1,498.0 L139.5,488.5 L145.9,488.5 L152.3,501.8 L160.0,509.5 L166.4,511.3 L179.2,509.7 L193.2,507.0 L199.6,500.5 L206.8,496.4 L213.7,500.0 L220.1,527.4 L226.5,537.6 L233.4,544.0 L240.6,543.3 L248.3,545.3 L256.0,545.0 L261.0,546.1 L267.5,553.0 L275.1,562.5 L281.5,563.2 L290.9,560.3 L295.1,558.7 L300.0,558.0 L307.9,557.6 L314.8,563.8 L322.0,556.6 L328.4,540.7 L335.3,537.9 L342.5,546.9 L349.4,545.9 L356.0,527.2 L366.8,525.4 L375.7,524.1 L382.7,522.0 L394.9,525.9 L402.6,525.9 L409.8,533.6 L416.7,550.2 L423.1,562.2 L429.5,559.9 L437.2,554.6 L443.6,540.7 L450.7,520.8 L457.6,519.5 L466.6,519.5 L471.7,518.2 L478.1,515.1 L484.5,499.0 L491.7,483.7 L498.6,474.7 L505.0,465.7 L511.4,438.9 L517.1,406.0 L521.6,380.0 L525.5,335.7 L531.9,276.8 L538.8,259.4 L546.0,270.4 L553.6,292.1 L561.3,317.7 L569.0,348.5 L571.5,380.0 L576.7,400.0 L579.8,419.0 L586.7,455.6 L593.3,496.0 L598.2,520.4 L604.3,546.9 L610.4,567.3 L618.6,593.9 L626.7,620.4 L632.9,632.7 L641.0,644.9 L647.1,651.4 L653.3,651.4 L661.4,640.8 L671.0,628.3 L677.3,620.0 L681.1,615.5 L687.5,600.3 L695.0,591.4 L702.2,575.4 L708.0,566.9 L713.1,562.1 L715.7,561.0 L723.3,559.6 L734.9,561.9 L741.2,571.5 L748.9,593.9 L755.3,604.1 L761.7,604.4 L769.1,616.5 L782.2,616.8 L784.8,617.1 L797.6,618.8 L805.2,619.1 L816.8,624.5 L837.2,636.5 L843.6,630.4 L851.3,630.9 L861.5,633.4 L869.0,636.3 L877.6,639.8" fill="none" stroke="#2f9fd0" stroke-width="2" stroke-linejoin="round"/>
<g shape-rendering="crispEdges">
<rect x="0" y="625" width="1118" height="1" fill="#cfcfcf"/>
<rect x="0" y="686" width="1172" height="1" fill="#9a9896"/>
<rect x="0" y="717" width="1118" height="1" fill="#cfcfcf"/>
<rect x="0" y="749" width="1118" height="1" fill="#cfcfcf"/>
</g>
<g shape-rendering="crispEdges">
<rect x="1166" y="27" width="6" height="1" fill="#8d8a87"/>
<rect x="1166" y="75" width="6" height="1" fill="#8d8a87"/>
<rect x="1166" y="124" width="6" height="1" fill="#8d8a87"/>
<rect x="1166" y="172" width="6" height="1" fill="#8d8a87"/>
<rect x="1166" y="220" width="6" height="1" fill="#8d8a87"/>
<rect x="1166" y="269" width="6" height="1" fill="#8d8a87"/>
<rect x="1166" y="317" width="6" height="1" fill="#8d8a87"/>
<rect x="1166" y="365" width="6" height="1" fill="#8d8a87"/>
<rect x="1166" y="413" width="6" height="1" fill="#8d8a87"/>
<rect x="1166" y="462" width="6" height="1" fill="#8d8a87"/>
<rect x="1166" y="510" width="6" height="1" fill="#8d8a87"/>
<rect x="1166" y="558" width="6" height="1" fill="#8d8a87"/>
<rect x="1166" y="607" width="6" height="1" fill="#8d8a87"/>
<rect x="1166" y="655" width="6" height="1" fill="#8d8a87"/>
</g>
<text x="1163" y="31" fill="#8d8a87" text-anchor="end">16,750</text>
<text x="1163" y="79" fill="#8d8a87" text-anchor="end">16,500</text>
<text x="1163" y="128" fill="#8d8a87" text-anchor="end">16,250</text>
<text x="1163" y="176" fill="#8d8a87" text-anchor="end">16,000</text>
<text x="1163" y="224" fill="#8d8a87" text-anchor="end">15,750</text>
<text x="1163" y="273" fill="#8d8a87" text-anchor="end">15,500</text>
<text x="1163" y="321" fill="#8d8a87" text-anchor="end">15,250</text>
<text x="1163" y="369" fill="#8d8a87" text-anchor="end">15,000</text>
<text x="1163" y="417" fill="#8d8a87" text-anchor="end">14,750</text>
<text x="1163" y="466" fill="#8d8a87" text-anchor="end">14,500</text>
<text x="1163" y="514" fill="#8d8a87" text-anchor="end">14,250</text>
<text x="1163" y="562" fill="#8d8a87" text-anchor="end">14,000</text>
<text x="1163" y="611" fill="#8d8a87" text-anchor="end">13,750</text>
<text x="1163" y="659" fill="#8d8a87" text-anchor="end">13,500</text>
<g shape-rendering="crispEdges">
<rect x="105" y="681" width="1" height="5" fill="#8d8a87"/>
<rect x="105" y="780" width="1" height="5" fill="#8d8a87"/>
<rect x="247" y="681" width="1" height="5" fill="#8d8a87"/>
<rect x="247" y="780" width="1" height="5" fill="#8d8a87"/>
<rect x="396" y="681" width="1" height="5" fill="#8d8a87"/>
<rect x="396" y="780" width="1" height="5" fill="#8d8a87"/>
<rect x="545" y="681" width="1" height="5" fill="#8d8a87"/>
<rect x="545" y="780" width="1" height="5" fill="#8d8a87"/>
<rect x="687" y="681" width="1" height="5" fill="#8d8a87"/>
<rect x="687" y="780" width="1" height="5" fill="#8d8a87"/>
<rect x="836" y="681" width="1" height="5" fill="#8d8a87"/>
<rect x="836" y="780" width="1" height="5" fill="#8d8a87"/>
</g>
<text x="105.5" y="678" fill="#8d8a87" text-anchor="middle">Aug</text>
<text x="247.5" y="678" fill="#8d8a87" text-anchor="middle">Sep</text>
<text x="396.5" y="678" fill="#8d8a87" text-anchor="middle">Okt</text>
<text x="545.5" y="678" fill="#8d8a87" text-anchor="middle">Nov</text>
<text x="687.5" y="678" fill="#8d8a87" text-anchor="middle">Dez</text>
<text x="836.5" y="678" fill="#8d8a87" text-anchor="middle">Jan '16</text>
<path d="M136.5,717.5 L138.2,711.9 L144.6,702.4 L152.3,697.3 L166.4,711.9 L173.5,717.0 L173.7,717.5 Z" fill="#a6eea6"/>
<path d="M192.8,717.5 L193.2,717.0 L193.7,717.5 Z" fill="#a6eea6"/>
<path d="M325.2,717.5 L327.9,709.3 L335.6,695.7 L342.5,699.8 L348.9,717.5 Z" fill="#a6eea6"/>
<path d="M360.5,717.5 L362.4,714.9 L369.3,715.7 L370.0,717.5 Z" fill="#a6eea6"/>
<path d="M404.0,717.5 L409.8,703.7 L416.7,698.3 L423.1,700.9 L430.3,713.9 L436.4,711.4 L443.6,713.7 L450.5,717.5 Z" fill="#a6eea6"/>
<path d="M450.5,717.5 L457.1,715.2 L464.0,717.0 L465.3,717.5 Z" fill="#a6eea6"/>
<path d="M12.5,749.5 L16.6,753.6 L24.3,755.6 L30.7,756.7 L37.9,759.2 L44.8,753.6 L57.6,752.1 L65.3,754.1 L74.3,749.5 Z" fill="#eba7a7"/>
<path d="M215.2,749.5 L220.1,758.7 L226.5,752.8 L229.8,749.5 Z" fill="#eba7a7"/>
<path d="M313.5,749.5 L314.8,750.3 L315.0,749.5 Z" fill="#eba7a7"/>
<path d="M534.8,749.5 L538.3,759.2 L545.2,772.5 L552.4,767.9 L558.7,768.2 L565.7,767.4 L572.3,764.3 L579.2,764.3 L586.4,761.0 L592.8,758.0 L600.5,754.9 L606.9,752.8 L613.3,750.5 L619.7,750.0 L621.5,749.5 Z" fill="#eba7a7"/>
<path d="M737.9,749.5 L741.8,763.1 L748.4,774.6 L755.3,765.6 L759.2,749.5 Z" fill="#eba7a7"/>
<path d="M767.1,749.5 L768.9,754.1 L771.0,749.5 Z" fill="#eba7a7"/>
<path d="M0.0,743.9 L10.2,747.2 L16.6,753.6 L24.3,755.6 L30.7,756.7 L37.9,759.2 L44.8,753.6 L57.6,752.1 L65.3,754.1 L76.8,748.2 L84.5,743.9 L90.9,744.4 L98.0,741.8 L104.9,747.7 L111.3,747.2 L125.4,742.1 L131.8,733.6 L138.2,711.9 L144.6,702.4 L152.3,697.3 L166.4,711.9 L173.5,717.0 L179.2,730.3 L186.1,725.4 L193.2,717.0 L199.6,722.9 L206.0,740.0 L213.2,745.7 L220.1,758.7 L226.5,752.8 L232.9,746.4 L245.7,744.4 L254.7,743.4 L260.6,740.8 L267.5,743.4 L274.4,744.6 L281.5,739.3 L294.3,737.5 L301.5,742.6 L307.9,745.9 L314.8,750.3 L321.2,729.8 L327.9,709.3 L335.6,695.7 L342.5,699.8 L348.9,717.5 L355.8,723.9 L362.4,714.9 L369.3,715.7 L375.7,732.4 L382.7,738.8 L389.8,740.8 L396.2,740.8 L402.6,720.8 L409.8,703.7 L416.7,698.3 L423.1,700.9 L430.3,713.9 L436.4,711.4 L443.6,713.7 L450.5,717.5 L457.1,715.2 L464.0,717.0 L471.0,719.6 L477.6,723.9 L484.5,725.2 L491.4,728.0 L497.3,727.2 L505.0,726.0 L511.7,726.5 L518.3,728.0 L525.0,722.1 L531.9,741.3 L538.3,759.2 L545.2,772.5 L552.4,767.9 L558.7,768.2 L565.7,767.4 L572.3,764.3 L579.2,764.3 L586.4,761.0 L592.8,758.0 L600.5,754.9 L606.9,752.8 L613.3,750.5 L619.7,750.0 L626.1,748.2 L633.2,745.7 L640.1,745.1 L647.1,746.9 L653.7,743.9 L660.6,744.4 L667.5,740.5 L674.2,745.9 L680.6,745.1 L687.5,742.1 L693.9,748.2 L701.1,747.7 L708.0,718.3 L714.4,718.3 L721.3,735.7 L727.9,732.4 L734.9,738.8 L741.8,763.1 L748.4,774.6 L755.3,765.6 L762.2,737.0 L768.9,754.1 L775.8,738.8 L782.7,724.7 L789.4,719.6 L796.3,721.3 L802.7,717.5 L809.6,738.8 L816.0,741.3 L823.2,746.4 L829.6,746.9 L836.7,739.3 L843.1,737.5 L850.0,734.1 L856.9,722.1 L863.6,734.1 L870.5,740.8 L877.6,748.5" fill="none" stroke="#ffcc00" stroke-width="2" stroke-linejoin="round"/>
<path d="M1118,601.5 L1125.5,593.5 L1180,593.5 L1180,609.5 L1125.5,609.5 Z" fill="#333333" stroke="#bdbdbd" stroke-width="1"/>
<text x="1148" y="605.8" fill="#f2f2f2" text-anchor="middle">13,780</text>
<path d="M1118,625.5 L1125.5,617.5 L1180,617.5 L1180,633.5 L1125.5,633.5 Z" fill="#333333" stroke="#bdbdbd" stroke-width="1"/>
<text x="1148" y="629.8" fill="#f2f2f2" text-anchor="middle">13,653</text>
<path d="M1118,717.5 L1125.5,709.5 L1180,709.5 L1180,725.5 L1125.5,725.5 Z" fill="#333333" stroke="#bdbdbd" stroke-width="1"/>
<text x="1148" y="721.8" fill="#f2f2f2" text-anchor="middle">100,00</text>
<path d="M1118,749.5 L1125.5,741.5 L1180,741.5 L1180,757.5 L1125.5,757.5 Z" fill="#333333" stroke="#bdbdbd" stroke-width="1"/>
<text x="1148" y="753.8" fill="#f2f2f2" text-anchor="middle">-100,00</text>
<rect x="1166" y="733" width="6" height="1" fill="#8d8a87" shape-rendering="crispEdges"/>
<text x="1163" y="737" fill="#8d8a87" text-anchor="end">0,00</text>
<rect x="5" y="5" width="400" height="16" fill="rgba(0,0,0,0.18)"/>
<rect x="5" y="21" width="255" height="16" fill="rgba(0,0,0,0.18)"/>
<rect x="5" y="37" width="206" height="16" fill="rgba(0,0,0,0.18)"/>
<rect x="5" y="53" width="114" height="16" fill="rgba(0,0,0,0.18)"/>
<rect x="5" y="691" width="143" height="16" fill="rgba(0,0,0,0.18)"/>
<text x="23.4" y="17" fill="#cfcdcb" letter-spacing="0.11">Silber (DB Indikation, last)</text>
<text x="171.8" y="17" fill="#cfcdcb">O: 13,870</text>
<text x="230.6" y="17" fill="#cfcdcb">H: 13,910</text>
<text x="289.5" y="17" fill="#cfcdcb">L: 13,750</text>
<text x="346.6" y="17" fill="#cfcdcb">C: 13,780</text>
<text x="23.4" y="33" fill="#ecebea" letter-spacing="0.05">13.07.2015 - 12.01.2016 (6 Monate, 1 Tag)</text>
<text x="23.4" y="49" fill="#ffcc00">BB(20, 2)</text>
<text x="80.4" y="49" fill="#ffcc00">14,433</text>
<text x="124.6" y="49" fill="#6d6a8e">14,006</text>
<text x="168.2" y="49" fill="#2f9fd0">13,580</text>
<text x="23.4" y="65" fill="#924592">EMA(14)</text>
<text x="75.6" y="65" fill="#924592">13,990</text>
<text x="23.5" y="703" fill="#ffcc00">CCI(20, hlc3)</text>
<text x="101.6" y="703" fill="#ffcc00">-100,39</text>
<rect x="7" y="44" width="10" height="3" fill="#ffcc00"/>
<rect x="7" y="60" width="10" height="3" fill="#924592"/>
<rect x="7" y="698" width="10" height="3" fill="#ffcc00"/>
<circle cx="12.5" cy="28.4" r="5.2" fill="none" stroke="#ecebea" stroke-width="1.2"/>
<path d="M12.5,25 L12.5,28.6 L14.6,30.6" fill="none" stroke="#ecebea" stroke-width="1.1"/>
<g stroke="#d2d0ce" stroke-width="1" fill="none" shape-rendering="crispEdges"><path d="M7.5,13 V18 M11.5,7 V11 M11.5,15 V18 M15.5,9 V13"/><rect x="6.5" y="9.5" width="2" height="4"/><rect x="10.5" y="11.5" width="2" height="4"/><rect x="14.5" y="13.5" width="2" height="4"/></g>
</svg></body></html>
